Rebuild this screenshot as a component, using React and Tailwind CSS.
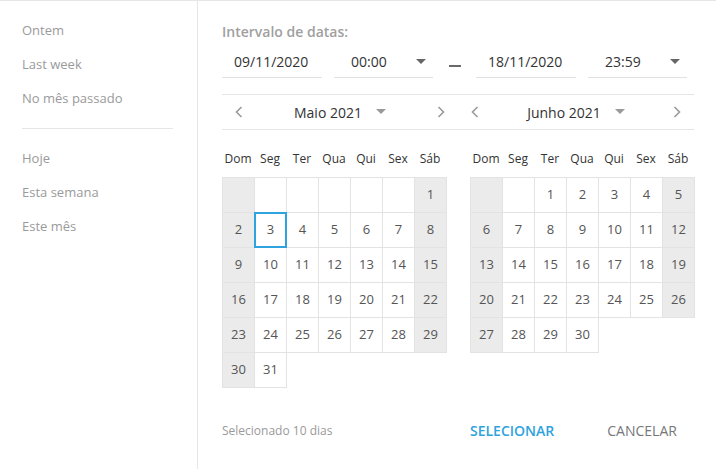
import React from 'react';

const FONT = { fontFamily: '"Open Sans", "Noto Sans", sans-serif' };

const presetsTop = ['Ontem', 'Last week', 'No mês passado'];
const presetsBottom = ['Hoje', 'Esta semana', 'Este mês'];
const dayNames = ['Dom', 'Seg', 'Ter', 'Qua', 'Qui', 'Sex', 'Sáb'];

const Caret = ({ className = '' }) => (
  <svg width="10" height="6" viewBox="0 0 10 6" className={className}>
    <path d="M0 0 L10 0 L5 5 Z" fill="currentColor" />
  </svg>
);

const Chevron = ({ dir }) => (
  <svg width="8" height="12" viewBox="0 0 8 12" className="text-[#9a9a9a]">
    <path
      d={dir === 'left' ? 'M6.5 1 L1.5 6 L6.5 11' : 'M1.5 1 L6.5 6 L1.5 11'}
      fill="none"
      stroke="currentColor"
      strokeWidth="1.6"
    />
  </svg>
);

const DateInput = ({ value, time }) => (
  <div className={`flex items-center h-[32px] border-b border-[#e2e2e2] ${time ? 'w-[99px] pl-[17px] pr-[7px] justify-between' : 'w-[100px] pl-[12px]'}`}>
    <span className="text-[14px] text-[#333]">{value}</span>
    {time && <Caret className="text-[#666]" />}
  </div>
);

const MonthHeader = ({ label }) => (
  <div className="w-[236px] h-[34px] flex items-center justify-between px-[13px]">
    <Chevron dir="left" />
    <div className="flex items-center gap-[14px]">
      <span className="text-[14px] text-[#333]">{label}</span>
      <Caret className="text-[#9a9a9a]" />
    </div>
    <Chevron dir="right" />
  </div>
);

// offset = number of leading blank cells, days = days in month
const Month = ({ offset, days, selected }) => {
  const cells = [];
  for (let i = 0; i < offset; i++) cells.push(null);
  for (let d = 1; d <= days; d++) cells.push(d);
  const rows = [];
  for (let i = 0; i < cells.length; i += 7) rows.push(cells.slice(i, i + 7));

  return (
    <div className="w-[225px]">
      <div className="grid grid-cols-7 h-[47px] pt-[20px] w-[224px]">
        {dayNames.map((d) => (
          <span key={d} className="text-center text-[12px] leading-[18px] text-[#333]">{d}</span>
        ))}
      </div>
      <div className="flex flex-col">
        {rows.map((row, ri) => (
          <div key={ri} className="flex">
            {row.map((d, ci) => {
              const weekend = ci === 0 || ci === 6;
              const isSel = d === selected;
              return (
                <div
                  key={ci}
                  className={`w-[33px] h-[36px] -mr-px -mb-px flex items-center justify-center text-[13px] text-[#555] border ${isSel ? 'border-2 border-[#2ea3dd] relative z-10' : 'border-[#e3e3e3]'} ${weekend ? 'bg-[#ebebeb]' : 'bg-white'}`}
                >
                  {d}
                </div>
              );
            })}
          </div>
        ))}
      </div>
    </div>
  );
};

export default function App() {
  return (
    <div className="w-[716px] h-[469px] bg-white border-t border-[#e6e6e6] flex overflow-hidden" style={FONT}>
      {/* Presets */}
      <aside className="w-[198px] shrink-0 border-r border-[#e6e6e6] pl-[22px] pt-[18px]">
        <ul className="flex flex-col gap-[12px]">
          {presetsTop.map((p) => (
            <li key={p} className="h-[22px] leading-[22px] text-[13px] text-[#9a9a9a]">{p}</li>
          ))}
        </ul>
        <div className="w-[151px] h-px bg-[#e6e6e6] mt-[19px] mb-[18px]" />
        <ul className="flex flex-col gap-[12px]">
          {presetsBottom.map((p) => (
            <li key={p} className="h-[22px] leading-[22px] text-[13px] text-[#9a9a9a]">{p}</li>
          ))}
        </ul>
      </aside>

      {/* Main */}
      <main className="flex-1 pl-[24px] pt-[20px]">
        <div className="text-[14px] font-semibold text-[#a0a0a0] leading-[22px]">Intervalo de datas:</div>
        <div className="flex items-center mt-[3px]">
          <DateInput value="09/11/2020" />
          <div className="ml-[12px]"><DateInput value="00:00" time /></div>
          <div className="w-[43px] flex justify-center pt-[8px]">
            <div className="w-[12px] h-[2px] bg-[#6a6a6a]" />
          </div>
          <DateInput value="18/11/2020" />
          <div className="ml-[12px]"><DateInput value="23:59" time /></div>
        </div>

        <div className="w-[472px] mt-[16px] border-y border-[#e6e6e6] flex">
          <MonthHeader label="Maio 2021" />
          <MonthHeader label="Junho 2021" />
        </div>

        <div className="flex gap-[23px]">
          <Month offset={6} days={31} selected={3} />
          <Month offset={2} days={30} />
        </div>

        <div className="flex items-center mt-[33px]">
          <span className="text-[12px] text-[#9a9a9a] w-[248px]">Selecionado 10 dias</span>
          <span className="text-[14px] font-semibold text-[#2ea3dd]">SELECIONAR</span>
          <span className="text-[14px] text-[#777] ml-[53px]">CANCELAR</span>
        </div>
      </main>
    </div>
  );
}
